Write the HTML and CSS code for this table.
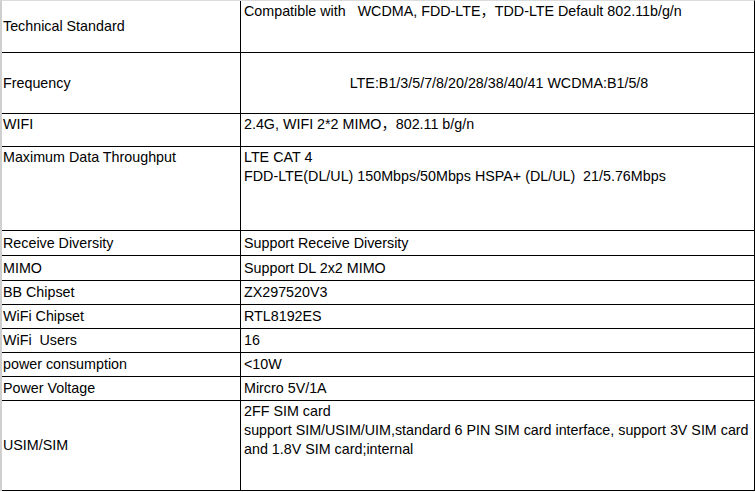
FILE: index.html
```html
<!DOCTYPE html>
<html>
<head>
<meta charset="utf-8">
<link rel="stylesheet" href="styles.css">
</head>
<body>
<div class="spec">
  <div class="row h52"><div class="k mid">Technical Standard</div><div class="v">Compatible with   WCDMA, FDD-LTE，TDD-LTE Default 802.11b/g/n</div></div>
  <div class="row h61"><div class="k mid">Frequency</div><div class="v mid center">LTE:B1/3/5/7/8/20/28/38/40/41 WCDMA:B1/5/8</div></div>
  <div class="row h33"><div class="k">WIFI</div><div class="v">2.4G, WIFI 2*2 MIMO，802.11 b/g/n</div></div>
  <div class="row h84"><div class="k">Maximum Data Throughput</div><div class="v">LTE CAT 4
FDD-LTE(DL/UL) 150Mbps/50Mbps HSPA+ (DL/UL)  21/5.76Mbps</div></div>
  <div class="row h25"><div class="k mid">Receive Diversity</div><div class="v mid">Support Receive Diversity</div></div>
  <div class="row h25"><div class="k mid">MIMO</div><div class="v mid">Support DL 2x2 MIMO</div></div>
  <div class="row h24"><div class="k mid">BB Chipset</div><div class="v mid">ZX297520V3</div></div>
  <div class="row h24"><div class="k mid">WiFi Chipset</div><div class="v mid">RTL8192ES</div></div>
  <div class="row h24"><div class="k mid">WiFi  Users</div><div class="v mid">16</div></div>
  <div class="row h24"><div class="k mid">power consumption</div><div class="v mid">&lt;10W</div></div>
  <div class="row h24"><div class="k mid">Power Voltage</div><div class="v mid">Mircro 5V/1A</div></div>
  <div class="row h90"><div class="k mid">USIM/SIM</div><div class="v">2FF SIM card
support SIM/USIM/UIM,standard 6 PIN SIM card interface, support 3V SIM card
and 1.8V SIM card;internal</div></div>
</div>
</body>
</html>
```
FILE: styles.css
```css
html, body {
  margin: 0;
  padding: 0;
  background: #fff;
}
.spec {
  width: 755px;
  box-sizing: border-box;
  border-top: 1px solid #dcdcdc;
  border-left: 2px solid #cfcfcf;
  border-right: 1px solid #000;
  font-family: "Liberation Sans", Arial, "Noto Sans CJK SC", sans-serif;
  font-size: 14.3px;
  line-height: 19px;
  color: #000;
}
.row {
  display: grid;
  grid-template-columns: 239px 1fr;
  box-sizing: border-box;
  border-bottom: 1px solid #000;
}
.k, .v {
  white-space: pre;
  display: flex;
  flex-direction: column;
  padding-top: 1px;
  overflow: hidden;
}
.k {
  border-right: 1px solid #000;
  padding-left: 1px;
}
.v {
  padding-left: 3px;
  padding-right: 0;
}
.mid {
  justify-content: center;
  padding-top: 0;
}
.center {
  text-align: center;
}
.h52 { height: 52px; }
.h61 { height: 61px; }
.h33 { height: 33px; }
.h84 { height: 84px; }
.h25 { height: 25px; }
.h24 { height: 24px; }
.h90 { height: 90px; }
```
